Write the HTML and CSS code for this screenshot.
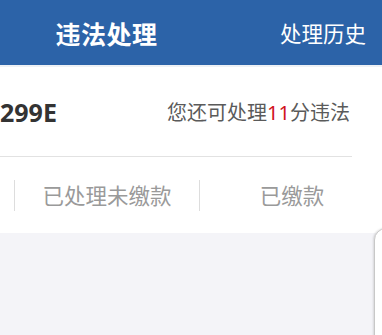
FILE: index.html
```html
<!DOCTYPE html>
<html lang="zh-CN">
<head>
    <meta charset="UTF-8">
    <meta name="viewport" content="width=device-width, initial-scale=1.0">
    <title>违法处理</title>
    <link rel="stylesheet" href="styles.css">
</head>
<body>
    <div class="header">
        <div class="title">违法处理</div>
        <div class="history">处理历史</div>
    </div>

    <div class="info">
        <div class="plate">299E</div>
        <div class="remain">您还可处理<span class="num">11</span>分违法</div>
    </div>

    <div class="tabs">
        <div class="tab tab-edge"></div>
        <div class="tab">已处理未缴款</div>
        <div class="tab">已缴款</div>
    </div>

    <div class="content"></div>

    <div class="float-card"></div>
</body>
</html>
```

FILE: styles.css
```css
body {
    margin: 0;
    width: 382px;
    height: 335px;
    overflow: hidden;
    position: relative;
    background: #ffffff;
    font-family: "Noto Sans", "Noto Sans CJK SC", sans-serif;
}
.header {
    height: 65px;
    background: #2c63a8;
    border-bottom: 2px solid #eef1f5;
    display: flex;
    align-items: center;
    color: #ffffff;
}
.title {
    width: 213px;
    text-align: center;
    font-size: 25px;
    font-weight: bold;
    letter-spacing: 0.5px;
}
.history {
    margin-left: auto;
    padding-right: 16px;
    font-size: 21.5px;
}
.info {
    height: 89px;
    margin-right: 30px;
    border-bottom: 1px solid #e2e2e2;
    display: flex;
    align-items: center;
    justify-content: space-between;
}
.plate {
    font-size: 25px;
    font-weight: bold;
    color: #333333;
}
.remain {
    font-size: 20px;
    color: #5a5a5a;
    margin-right: 2px;
}
.remain .num {
    color: #d0121b;
}
.tabs {
    height: 76px;
    display: flex;
    align-items: center;
}
.tab {
    width: 184px;
    flex: none;
    text-align: center;
    font-size: 21.5px;
    line-height: 31px;
    color: #9a9a9a;
    border-left: 1px solid #dddddd;
}
.tab-edge {
    width: 14px;
    height: 31px;
    border-left: none;
    border-right: 1px solid #dddddd;
}
.tab-edge + .tab {
    border-left: none;
}
.content {
    height: 102px;
    background: #f4f4f8;
}
.float-card {
    position: absolute;
    left: 374px;
    top: 228px;
    width: 40px;
    height: 120px;
    background: #ffffff;
    border: 1px solid #c8c8c8;
    border-radius: 12px 0 0 0;
    box-shadow: -1px 0 2px rgba(0, 0, 0, 0.12);
}
```
